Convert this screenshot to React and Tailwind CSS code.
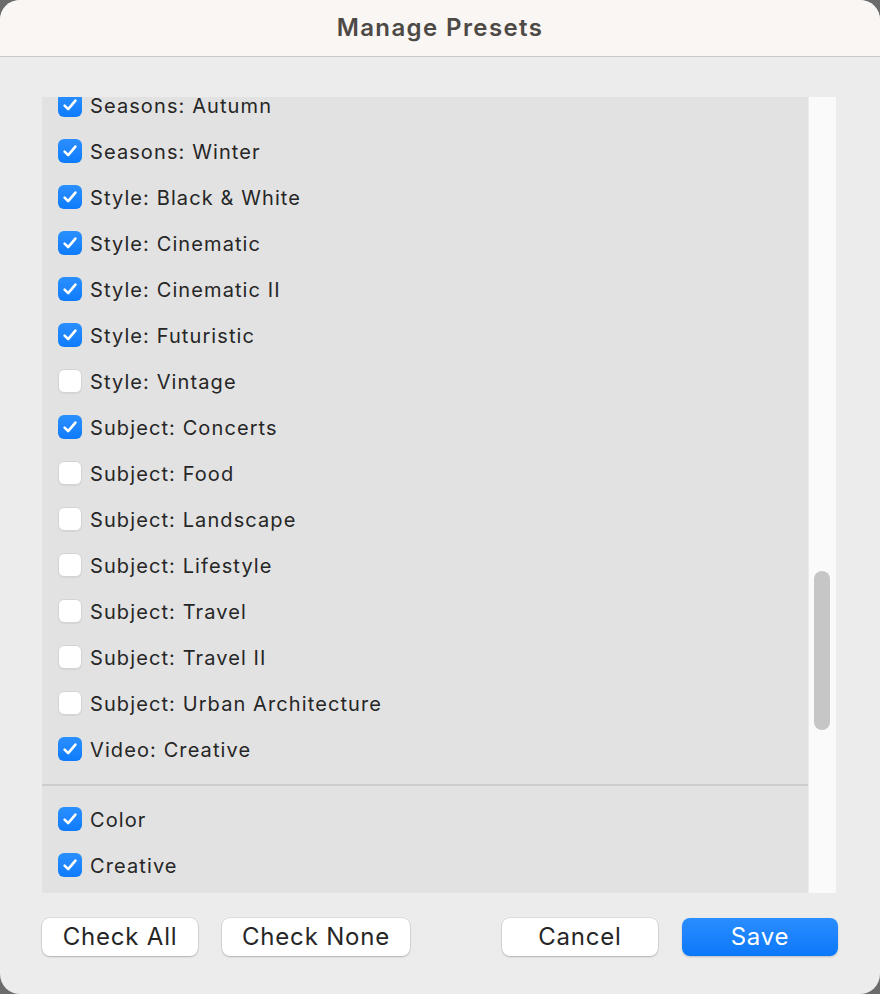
import React from 'react';

const mainPresets = [
  ['Seasons: Autumn', true],
  ['Seasons: Winter', true],
  ['Style: Black & White', true],
  ['Style: Cinematic', true],
  ['Style: Cinematic II', true],
  ['Style: Futuristic', true],
  ['Style: Vintage', false],
  ['Subject: Concerts', true],
  ['Subject: Food', false],
  ['Subject: Landscape', false],
  ['Subject: Lifestyle', false],
  ['Subject: Travel', false],
  ['Subject: Travel II', false],
  ['Subject: Urban Architecture', false],
  ['Video: Creative', true],
];

const groupPresets = [
  ['Color', true],
  ['Creative', true],
];

function Checkbox({ checked }) {
  if (!checked) {
    return (
      <span className="w-[24px] h-[24px] rounded-[6px] bg-white border border-[#d4d4d4] shadow-[0_1px_1px_rgba(0,0,0,0.06)] shrink-0" />
    );
  }
  return (
    <span className="w-[24px] h-[24px] rounded-[6px] bg-gradient-to-b from-[#2a8fff] to-[#0d7bfb] flex items-center justify-center shrink-0">
      <svg width="18" height="18" viewBox="0 0 18 18" fill="none">
        <path d="M3.6 9.6 L7.2 13.2 L14.4 4.6" stroke="white" strokeWidth="2.6" strokeLinecap="round" strokeLinejoin="round" />
      </svg>
    </span>
  );
}

function Row({ label, checked }) {
  return (
    <div className="h-[46px] flex items-center gap-[8px] pl-[16px] shrink-0">
      <Checkbox checked={checked} />
      <span className="text-[20px] text-[#262626] tracking-[1.1px] pt-[1px]">{label}</span>
    </div>
  );
}

function Button({ children, primary, width }) {
  return (
    <button
      className={
        'h-[38px] rounded-[8px] text-[24px] leading-none tracking-[0.8px] flex items-center justify-center ' +
        (primary
          ? 'bg-gradient-to-b from-[#2a8dff] to-[#0a78fa] text-white shadow-[0_1px_2px_rgba(0,0,0,0.2)]'
          : 'bg-white text-[#262626] shadow-[0_0_0_0.5px_rgba(0,0,0,0.12),0_1px_2px_rgba(0,0,0,0.2)]')
      }
      style={{ width }}
    >
      {children}
    </button>
  );
}

export default function App() {
  return (
    <div className="w-[880px] h-[994px] bg-[#6b6b6b]" style={{ fontFamily: 'Inter, "Liberation Sans", sans-serif' }}>
      <div className="w-full h-full rounded-[20px] overflow-hidden bg-[#ececec] flex flex-col">
        {/* Title bar */}
        <div className="h-[57px] shrink-0 bg-[#faf6f3] border-b border-[#c8c8c8] flex items-center justify-center">
          <span className="text-[24px] font-semibold tracking-[1.4px] text-[#4d4945]">Manage Presets</span>
        </div>

        {/* List */}
        <div className="mt-[40px] ml-[42px] mr-[44px] h-[796px] flex bg-[#e2e2e2] overflow-hidden">
          <div className="flex-1 overflow-hidden">
            <div className="-mt-[15px] flex flex-col">
              {mainPresets.map(([label, checked]) => (
                <Row key={label} label={label} checked={checked} />
              ))}
              <div className="h-[12px] shrink-0" />
              <div className="h-[2px] bg-[#cdcdcd] shrink-0" />
              <div className="h-[10px] shrink-0" />
              {groupPresets.map(([label, checked]) => (
                <Row key={label} label={label} checked={checked} />
              ))}
            </div>
          </div>
          <div className="w-[28px] shrink-0 bg-[#fafafa] border-l border-[#ebebeb] pt-[474px] flex justify-center">
            <div className="w-[16px] h-[159px] rounded-full bg-[#c6c6c6] ml-[-2px]" />
          </div>
        </div>

        {/* Buttons */}
        <div className="mt-[25px] px-[42px] flex items-center">
          <Button width={156}>Check All</Button>
          <div className="w-[24px]" />
          <Button width={188}>Check None</Button>
          <div className="flex-1" />
          <Button width={156}>Cancel</Button>
          <div className="w-[24px]" />
          <Button width={156} primary>Save</Button>
        </div>
      </div>
    </div>
  );
}
